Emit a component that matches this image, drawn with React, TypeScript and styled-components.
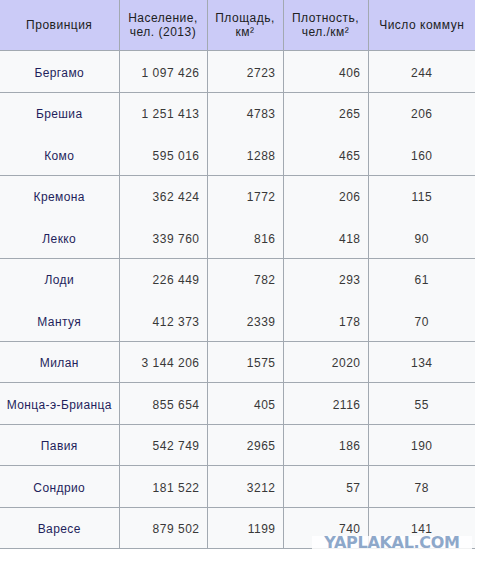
import React from 'react';
import styled, { createGlobalStyle } from 'styled-components';

type Row = {
  name: string;
  population: string;
  area: string;
  density: string;
  communes: string;
  noLine?: boolean;
};

const rows: Row[] = [
  { name: 'Бергамо', population: '1 097 426', area: '2723', density: '406', communes: '244' },
  { name: 'Брешиа', population: '1 251 413', area: '4783', density: '265', communes: '206' },
  { name: 'Комо', population: '595 016', area: '1288', density: '465', communes: '160', noLine: true },
  { name: 'Кремона', population: '362 424', area: '1772', density: '206', communes: '115' },
  { name: 'Лекко', population: '339 760', area: '816', density: '418', communes: '90', noLine: true },
  { name: 'Лоди', population: '226 449', area: '782', density: '293', communes: '61' },
  { name: 'Мантуя', population: '412 373', area: '2339', density: '178', communes: '70', noLine: true },
  { name: 'Милан', population: '3 144 206', area: '1575', density: '2020', communes: '134' },
  { name: 'Монца-э-Брианца', population: '855 654', area: '405', density: '2116', communes: '55' },
  { name: 'Павия', population: '542 749', area: '2965', density: '186', communes: '190' },
  { name: 'Сондрио', population: '181 522', area: '3212', density: '57', communes: '78' },
  { name: 'Варесе', population: '879 502', area: '1199', density: '740', communes: '141' },
];

const App: React.FC = () => {
  return (
    <>
      <GlobalStyle />
      <Page>
        <Table>
          <colgroup>
            <col style={{ width: 119 }} />
            <col style={{ width: 88 }} />
            <col style={{ width: 76 }} />
            <col style={{ width: 85 }} />
            <col style={{ width: 107 }} />
          </colgroup>
          <thead>
            <tr>
              <Th>Провинция</Th>
              <Th>
                Население,
                <br />
                чел. (2013)
              </Th>
              <Th>
                Площадь,
                <br />
                км²
              </Th>
              <Th>
                Плотность,
                <br />
                чел./км²
              </Th>
              <Th $last>Число коммун</Th>
            </tr>
          </thead>
          <tbody>
            {rows.map((row) => (
              <BodyRow key={row.name} $noLine={row.noLine}>
                <NameCell>{row.name}</NameCell>
                <NumCell>{row.population}</NumCell>
                <NumCell>{row.area}</NumCell>
                <NumCell>{row.density}</NumCell>
                <CenterCell $last>{row.communes}</CenterCell>
              </BodyRow>
            ))}
          </tbody>
        </Table>
        <Watermark>YAPLAKAL.COM</Watermark>
      </Page>
    </>
  );
};

const GlobalStyle = createGlobalStyle`
  body {
    margin: 0;
    background: #ffffff;
    font-family: "Liberation Sans", Arial, sans-serif;
  }
`;

const Page = styled.div`
  position: relative;
  width: 485px;
  height: 574px;
  background: #ffffff;
`;

const Table = styled.table`
  width: 475px;
  table-layout: fixed;
  border-collapse: collapse;
  background: #f8f9fa;
  font-size: 12px;
  letter-spacing: 0.5px;
  border-bottom: 1px solid #a2a9b1;
`;

const Th = styled.th<{ $last?: boolean }>`
  height: 50px;
  padding: 0 2px;
  background: #cbcbf7;
  color: #202122;
  font-weight: normal;
  line-height: 14px;
  text-align: center;
  white-space: nowrap;
  border-right: ${({ $last }) => ($last ? 'none' : '1px solid #a2a9b1')};
`;

const BodyRow = styled.tr<{ $noLine?: boolean }>`
  height: 41.5px;
  border-top: 1px solid ${({ $noLine }) => ($noLine ? '#f8f9fa' : '#a2a9b1')};
`;

const Td = styled.td<{ $last?: boolean }>`
  padding: 3px 8px 0;
  color: #383838;
  line-height: 14px;
  white-space: nowrap;
  border-right: ${({ $last }) => ($last ? 'none' : '1px solid #a2a9b1')};
`;

const NameCell = styled(Td)`
  text-align: center;
  color: #1f1f5c;
  padding: 3px 1px 0;
  letter-spacing: 0.4px;
`;

const NumCell = styled(Td)`
  text-align: right;
  padding-right: 7px;
`;

const CenterCell = styled(Td)`
  text-align: center;
`;

const Watermark = styled.div`
  position: absolute;
  left: 312px;
  top: 536px;
  width: 160px;
  height: 14px;
  background: rgba(255, 255, 255, 0.85);
  color: #8ea8ca;
  font-family: "DejaVu Sans", Verdana, sans-serif;
  font-weight: bold;
  font-size: 16px;
  line-height: 14px;
  text-align: center;
  letter-spacing: -0.3px;
`;

export default App;
